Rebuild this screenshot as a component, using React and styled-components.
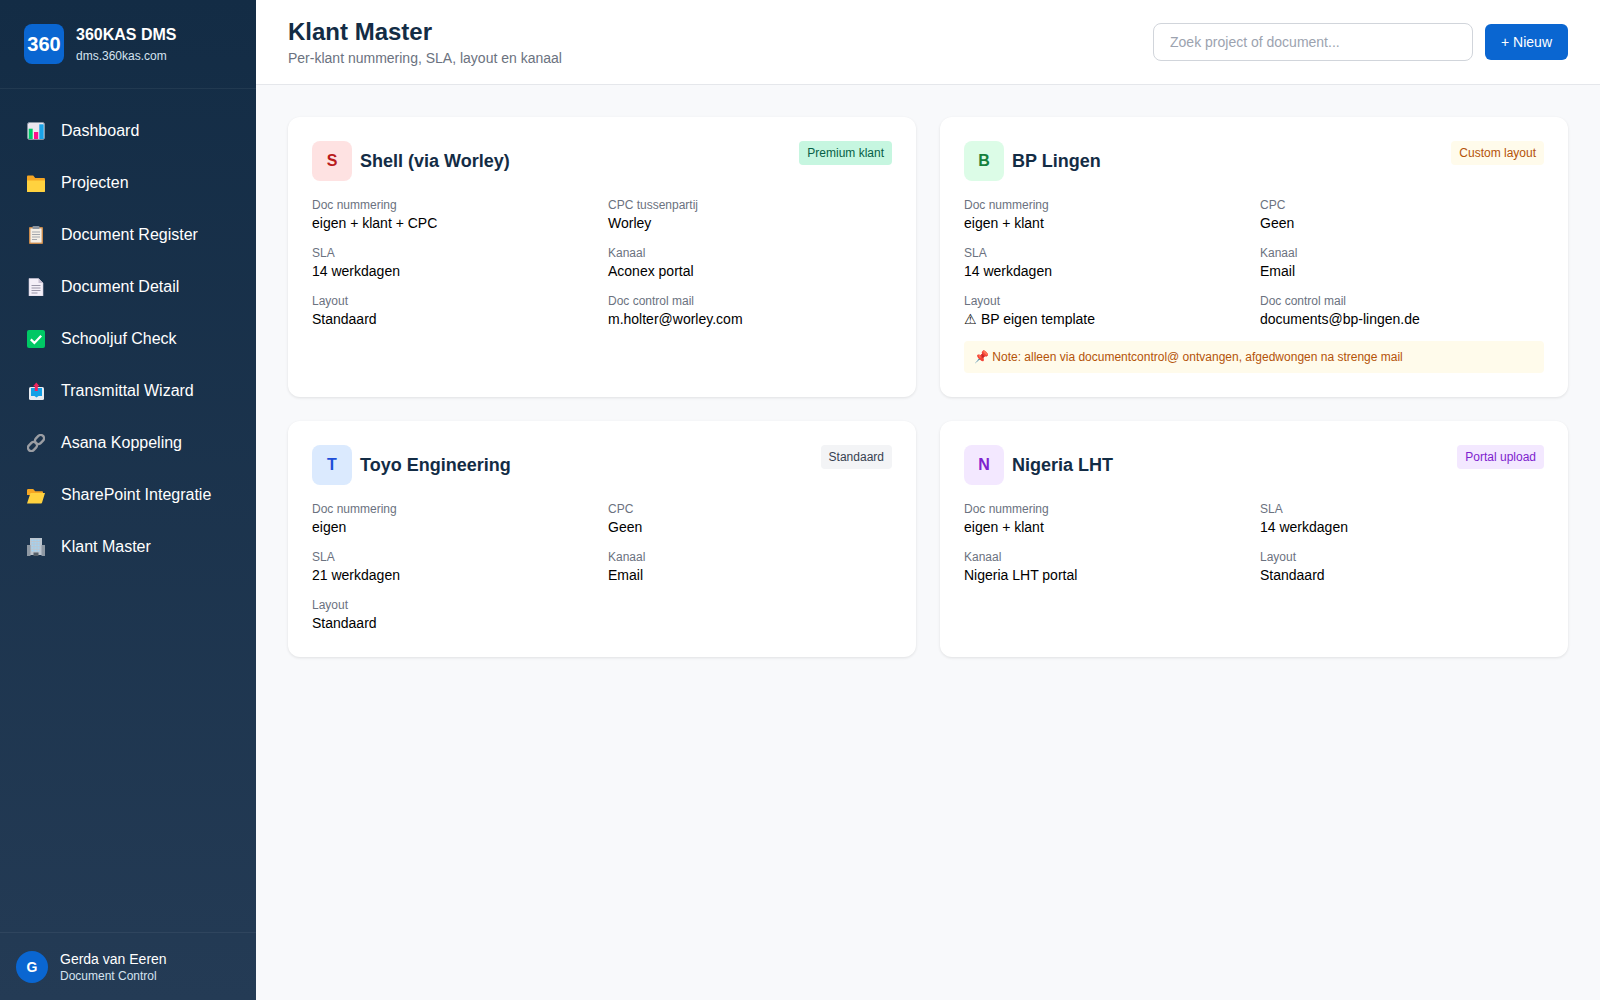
import React from 'react';
import styled, { createGlobalStyle } from 'styled-components';

const GlobalStyle = createGlobalStyle`
  * { box-sizing: border-box; }
  body {
    margin: 0;
    background: #f8f9fb;
    font-family: 'Liberation Sans', Arial, sans-serif;
    color: #000;
  }
`;

const Shell = styled.div`
  display: flex;
  min-height: 100vh;
`;

const Sidebar = styled.aside`
  width: 256px;
  height: 1000px;
  flex-shrink: 0;
  display: flex;
  flex-direction: column;
  background: linear-gradient(180deg, #132c45 0%, #243b55 100%);
  color: #fff;
`;

const Brand = styled.div`
  display: flex;
  align-items: center;
  gap: 12px;
  height: 89px;
  padding: 0 24px;
  border-bottom: 1px solid rgba(255, 255, 255, 0.06);
`;

const BrandLogo = styled.div`
  width: 40px;
  height: 40px;
  border-radius: 8px;
  background: #0a66d1;
  display: flex;
  align-items: center;
  justify-content: center;
  font-size: 20px;
  font-weight: 700;
`;

const BrandName = styled.div`
  font-size: 16px;
  font-weight: 700;
  line-height: 20px;
`;

const BrandUrl = styled.div`
  font-size: 12px;
  line-height: 16px;
  margin-top: 3px;
  color: #d5e3f0;
`;

const Nav = styled.nav`
  flex: 1;
  padding-top: 16px;
`;

const NavItem = styled.div`
  display: flex;
  align-items: center;
  gap: 16px;
  height: 52px;
  padding: 0 27px;
  font-size: 16px;
`;

const NavIcon = styled.svg`
  width: 18px;
  height: 18px;
  flex-shrink: 0;
`;

const UserBar = styled.div`
  display: flex;
  align-items: center;
  gap: 12px;
  height: 68px;
  padding: 0 16px;
  border-top: 1px solid rgba(255, 255, 255, 0.06);
`;

const Avatar = styled.div`
  width: 32px;
  height: 32px;
  border-radius: 50%;
  background: #0a66d1;
  display: flex;
  align-items: center;
  justify-content: center;
  font-size: 14px;
  font-weight: 700;
`;

const UserName = styled.div`
  font-size: 14px;
  line-height: 18px;
`;

const UserRole = styled.div`
  font-size: 12px;
  line-height: 16px;
  color: #d5e3f0;
`;

const Main = styled.main`
  flex: 1;
  min-width: 0;
`;

const TopBar = styled.header`
  display: flex;
  align-items: center;
  justify-content: space-between;
  height: 85px;
  padding: 0 32px;
  background: #fff;
  border-bottom: 1px solid #e5e7eb;
`;

const PageTitle = styled.h1`
  margin: 0;
  font-size: 24px;
  line-height: 30px;
  font-weight: 700;
  color: #132c45;
`;

const PageSub = styled.p`
  margin: 3px 0 0;
  font-size: 14px;
  line-height: 17px;
  color: #6b7280;
`;

const TopActions = styled.div`
  display: flex;
  align-items: center;
  gap: 12px;
`;

const Search = styled.input`
  width: 320px;
  height: 38px;
  padding: 0 16px;
  border: 1px solid #d1d5db;
  border-radius: 8px;
  font-family: inherit;
  font-size: 14px;
  &::placeholder { color: #9ca3af; }
`;

const NewButton = styled.button`
  height: 36px;
  padding: 0 16px;
  border: 0;
  border-radius: 6px;
  background: #0a66d1;
  color: #fff;
  font-family: inherit;
  font-size: 14px;
`;

const CardGrid = styled.div`
  display: grid;
  grid-template-columns: 1fr 1fr;
  gap: 24px;
  padding: 32px;
`;

const Card = styled.section`
  background: #fff;
  border-radius: 12px;
  padding: 24px 24px 25px;
  box-shadow: 0 1px 3px rgba(0, 0, 0, 0.1);
`;

const CardHead = styled.div`
  display: flex;
  align-items: flex-start;
  justify-content: space-between;
  margin-bottom: 17px;
`;

const CardTitleWrap = styled.div`
  display: flex;
  align-items: center;
  gap: 8px;
`;

const Initial = styled.div`
  width: 40px;
  height: 40px;
  border-radius: 8px;
  display: flex;
  align-items: center;
  justify-content: center;
  font-size: 16px;
  font-weight: 700;
  background: ${p => p.$bg};
  color: ${p => p.$fg};
`;

const CardName = styled.div`
  font-size: 18px;
  font-weight: 700;
  color: #132c45;
`;

const Badge = styled.span`
  padding: 4px 8px;
  border-radius: 4px;
  font-size: 12px;
  line-height: 16px;
  background: ${p => p.$bg};
  color: ${p => p.$fg};
`;

const Fields = styled.div`
  display: grid;
  grid-template-columns: 1fr 1fr;
  row-gap: 14px;
  column-gap: 12px;
`;

const FieldLabel = styled.div`
  font-size: 12px;
  line-height: 14px;
  color: #6b7280;
  margin-bottom: 2px;
`;

const FieldValue = styled.div`
  font-size: 14px;
  line-height: 18px;
`;

const Note = styled.div`
  margin: 13px 0 -1px;
  padding: 8px 10px;
  border-radius: 4px;
  background: #fffbeb;
  color: #b45309;
  font-size: 12px;
  line-height: 16px;
`;

const icons = {
  chart: (
    <>
      <rect x="0.5" y="0.5" width="17" height="17" rx="2" fill="#ebe6ef" stroke="#8894a2" />
      <rect x="1.7" y="6.7" width="4" height="10.3" fill="#00c96b" />
      <rect x="7" y="10" width="4.2" height="7" fill="#ff0f8c" />
      <rect x="12.3" y="2.3" width="4.4" height="14.7" fill="#1aa3e8" />
    </>
  ),
  folder: (
    <>
      <path d="M0 2.8C0 2 .5 1.5 1.2 1.5h5l2 2.5h8.6c.7 0 1.2.5 1.2 1.2V8H0z" fill="#f5a623" />
      <path d="M0 6.5h18v11c0 .3-.2.5-.5.5H.5a.5.5 0 0 1-.5-.5z" fill="#ffd23f" />
    </>
  ),
  clipboard: (
    <>
      <rect x="2" y="1" width="14" height="17" rx="1" fill="#c98a4b" />
      <rect x="3.4" y="2.4" width="11.2" height="14.2" fill="#f4efe6" />
      <rect x="5.5" y="0" width="7" height="3" rx="0.8" fill="#8b95a1" />
      <path d="M5 6h8M5 8.5h8M5 11h8M5 13.5h5" stroke="#a3a7ad" strokeWidth="1" />
    </>
  ),
  doc: (
    <>
      <path d="M2 .5h9.5L16 5v13H2z" fill="#f4eff8" stroke="#cfc7d8" strokeWidth="0.6" />
      <path d="M11.5.5V5H16z" fill="#c8c0d2" />
      <path d="M4.5 7.5h9M4.5 10h9M4.5 12.5h9M4.5 15h6" stroke="#9a96a8" strokeWidth="1" />
    </>
  ),
  check: (
    <>
      <rect width="18" height="18" rx="2" fill="#00c865" />
      <path d="M3.8 9.4l3.6 3.5 6.8-7.2" fill="none" stroke="#fff" strokeWidth="2.2" />
    </>
  ),
  outbox: (
    <>
      <rect x="2" y="5" width="15" height="13" rx="1.5" fill="#e9ebf0" />
      <path d="M4 6h11v8h-3.5l-2 1.5-2-1.5H4z" fill="#14a0e6" />
      <path d="M9.3 .5l3.2 3.8h-1.7V9H7.8V4.3H6.1z" fill="#f0245f" />
    </>
  ),
  link: (
    <g fill="none" stroke="#9a9da3" strokeWidth="2.4">
      <rect x="0.5" y="9.2" width="10" height="6.6" rx="3.3" transform="rotate(-45 5.5 12.5)" />
      <rect x="7.5" y="2.2" width="10" height="6.6" rx="3.3" transform="rotate(-45 12.5 5.5)" />
    </g>
  ),
  openFolder: (
    <>
      <path d="M0 4.3C0 3.6.5 3 1.2 3h5l2 2.3h6.6c.7 0 1.2.5 1.2 1.2V9H0v8z" fill="#f5a623" />
      <path d="M3.5 7H18l-3 9.8c-.1.4-.5.7-.9.7H0z" fill="#ffd23f" />
    </>
  ),
  building: (
    <>
      <rect x="3" y="0" width="12" height="17" fill="#bcc5ce" />
      <rect x="0" y="7" width="3.5" height="11" fill="#8e98a3" />
      <rect x="14.5" y="7" width="3.5" height="11" fill="#8e98a3" />
      <path d="M4.5 2.2h9M4.5 4.8h9M4.5 7.4h9M4.5 10h9M4.5 12.6h9" stroke="#9fd2f4" strokeWidth="1.6" strokeDasharray="2 1" />
      <rect x="6.5" y="14.5" width="5" height="3.5" fill="#56606a" />
    </>
  ),
};

const navItems = [
  ['chart', 'Dashboard'],
  ['folder', 'Projecten'],
  ['clipboard', 'Document Register'],
  ['doc', 'Document Detail'],
  ['check', 'Schooljuf Check'],
  ['outbox', 'Transmittal Wizard'],
  ['link', 'Asana Koppeling'],
  ['openFolder', 'SharePoint Integratie'],
  ['building', 'Klant Master'],
];

const clients = [
  {
    name: 'Shell (via Worley)', initial: 'S', bg: '#fee2e2', fg: '#b91c1c',
    badge: 'Premium klant', badgeBg: '#c6f6e0', badgeFg: '#065f46',
    fields: [
      ['Doc nummering', 'eigen + klant + CPC'], ['CPC tussenpartij', 'Worley'],
      ['SLA', '14 werkdagen'], ['Kanaal', 'Aconex portal'],
      ['Layout', 'Standaard'], ['Doc control mail', 'm.holter@worley.com'],
    ],
  },
  {
    name: 'BP Lingen', initial: 'B', bg: '#dcfce7', fg: '#15803d',
    badge: 'Custom layout', badgeBg: '#fffbeb', badgeFg: '#b45309',
    fields: [
      ['Doc nummering', 'eigen + klant'], ['CPC', 'Geen'],
      ['SLA', '14 werkdagen'], ['Kanaal', 'Email'],
      ['Layout', '⚠ BP eigen template'], ['Doc control mail', 'documents@bp-lingen.de'],
    ],
    note: '📌 Note: alleen via documentcontrol@ ontvangen, afgedwongen na strenge mail',
  },
  {
    name: 'Toyo Engineering', initial: 'T', bg: '#dbeafe', fg: '#1d4ed8',
    badge: 'Standaard', badgeBg: '#f3f4f6', badgeFg: '#374151',
    fields: [
      ['Doc nummering', 'eigen'], ['CPC', 'Geen'],
      ['SLA', '21 werkdagen'], ['Kanaal', 'Email'],
      ['Layout', 'Standaard'],
    ],
  },
  {
    name: 'Nigeria LHT', initial: 'N', bg: '#f3e8ff', fg: '#7e22ce',
    badge: 'Portal upload', badgeBg: '#f3e8ff', badgeFg: '#7e22ce',
    fields: [
      ['Doc nummering', 'eigen + klant'], ['SLA', '14 werkdagen'],
      ['Kanaal', 'Nigeria LHT portal'], ['Layout', 'Standaard'],
    ],
  },
];

const App = () => (
  <Shell>
    <GlobalStyle />
    <Sidebar>
      <Brand>
        <BrandLogo>360</BrandLogo>
        <div>
          <BrandName>360KAS DMS</BrandName>
          <BrandUrl>dms.360kas.com</BrandUrl>
        </div>
      </Brand>
      <Nav>
        {navItems.map(([icon, label]) => (
          <NavItem key={label}>
            <NavIcon viewBox="0 0 18 18">{icons[icon]}</NavIcon>
            {label}
          </NavItem>
        ))}
      </Nav>
      <UserBar>
        <Avatar>G</Avatar>
        <div>
          <UserName>Gerda van Eeren</UserName>
          <UserRole>Document Control</UserRole>
        </div>
      </UserBar>
    </Sidebar>
    <Main>
      <TopBar>
        <div>
          <PageTitle>Klant Master</PageTitle>
          <PageSub>Per-klant nummering, SLA, layout en kanaal</PageSub>
        </div>
        <TopActions>
          <Search placeholder="Zoek project of document..." />
          <NewButton>+ Nieuw</NewButton>
        </TopActions>
      </TopBar>
      <CardGrid>
        {clients.map(c => (
          <Card key={c.name}>
            <CardHead>
              <CardTitleWrap>
                <Initial $bg={c.bg} $fg={c.fg}>{c.initial}</Initial>
                <CardName>{c.name}</CardName>
              </CardTitleWrap>
              <Badge $bg={c.badgeBg} $fg={c.badgeFg}>{c.badge}</Badge>
            </CardHead>
            <Fields>
              {c.fields.map(([label, value]) => (
                <div key={label}>
                  <FieldLabel>{label}</FieldLabel>
                  <FieldValue>{value}</FieldValue>
                </div>
              ))}
            </Fields>
            {c.note && <Note>{c.note}</Note>}
          </Card>
        ))}
      </CardGrid>
    </Main>
  </Shell>
);

export default App;
